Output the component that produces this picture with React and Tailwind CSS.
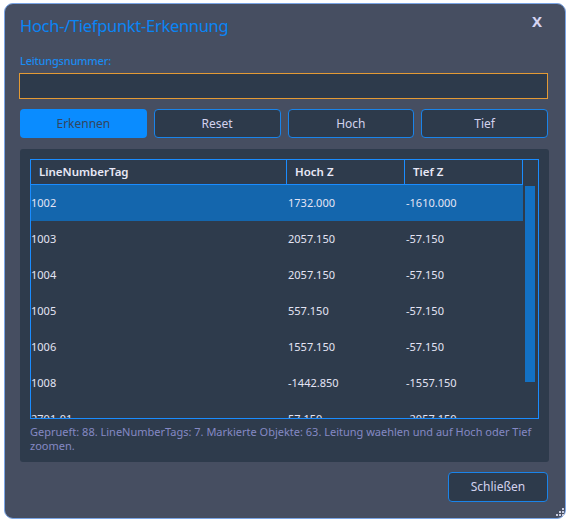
import React from 'react';

const rows = [
    { tag: '1002', hoch: '1732.000', tief: '-1610.000' },
    { tag: '1003', hoch: '2057.150', tief: '-57.150' },
    { tag: '1004', hoch: '2057.150', tief: '-57.150' },
    { tag: '1005', hoch: '557.150', tief: '-57.150' },
    { tag: '1006', hoch: '1557.150', tief: '-57.150' },
    { tag: '1008', hoch: '-1442.850', tief: '-1557.150' },
    { tag: '2701-01', hoch: '57.150', tief: '-2057.150' },
];

const buttons = ['Erkennen', 'Reset', 'Hoch', 'Tief'];

export default function App() {
    const selected = '1002';

    return (
        <div className="w-[569px] h-[523px] bg-white pt-[3px] pl-[4px] font-['Noto_Sans','Open_Sans',sans-serif]">
            <div className="relative w-[562px] h-[516px] bg-[#464e61] border border-[#7aa5e6] rounded-[9px] px-[15px] flex flex-col">
                {/* Title + close */}
                <div className="flex items-start justify-between pt-[10px]">
                    <h1 className="mt-[1px] text-[16.5px] leading-[22px] text-[#0a85f5] tracking-[-0.3px]">Hoch-/Tiefpunkt-Erkennung</h1>
                    <button className="mt-[-2px] mr-[8px] text-[15px] leading-[18px] font-bold text-[#d6d4f2]">X</button>
                </div>

                <label className="mt-[17px] text-[11px] leading-[14px] font-medium text-[#1a8bf0] tracking-[-0.2px]">Leitungsnummer:</label>
                <input
                    type="text"
                    className="mt-[5px] h-[26px] w-[529px] ml-[-1px] bg-[#2d3a4b] border border-[#e39a35] outline-none px-1 text-[12px] text-[#dedcf2]"
                />

                {/* Action buttons */}
                <div className="mt-[10px] w-[528px] grid grid-cols-4 gap-[7px]">
                    {buttons.map((label, i) => (
                        <button
                            key={label}
                            className={
                                i === 0
                                    ? 'h-[29px] rounded-[4px] bg-[#0a8cff] text-[#34465e] text-[12px]'
                                    : 'h-[29px] rounded-[4px] bg-[#2d3a4b] border border-[#1a84ea] text-[#d3d2ee] text-[12px]'
                            }
                        >
                            {label}
                        </button>
                    ))}
                </div>

                {/* Result panel */}
                <div className="mt-[11px] w-[529px] h-[313px] bg-[#2e3b4c] rounded-[3px] px-[10px] pt-[10px]">
                    <div className="flex h-[260px] border border-[#1a8cff] text-[#e4e4f4]">
                        <div className="w-[492px] flex flex-col">
                            <div className="flex h-[25px] border-b border-[#1a8cff] text-[11.5px] font-semibold text-[#e8e8f6]">
                                <div className="w-[256px] border-r border-[#1a8cff] pl-[8px] flex items-center">LineNumberTag</div>
                                <div className="w-[118px] border-r border-[#1a8cff] pl-[8px] flex items-center">Hoch Z</div>
                                <div className="w-[118px] border-r border-[#1a8cff] pl-[8px] flex items-center">Tief Z</div>
                            </div>
                            <div className="flex-1 overflow-hidden">
                                {rows.map((r) => (
                                    <div
                                        key={r.tag}
                                        className={
                                            r.tag === selected
                                                ? 'flex h-[36px] items-center text-[11px] bg-[#1466ad]'
                                                : 'flex h-[36px] items-center text-[11px]'
                                        }
                                    >
                                        <div className="w-[256px]">{r.tag}</div>
                                        <div className="w-[118px] pl-[1px]">{r.hoch}</div>
                                        <div className="w-[118px] pl-[1px]">{r.tief}</div>
                                    </div>
                                ))}
                            </div>
                        </div>
                        {/* Scrollbar */}
                        <div className="w-[14px] pt-[26px] pl-[2px]">
                            <div className="w-[10px] h-[196px] bg-[#1371c4]" />
                        </div>
                    </div>
                    <p className="mt-[6px] text-[11px] leading-[13.5px] text-[#8589c4]">
                        Geprueft: 88. LineNumberTags: 7. Markierte Objekte: 63. Leitung waehlen und auf Hoch oder Tief zoomen.
                    </p>
                </div>

                <div className="mt-[10px] flex justify-end pr-[2px]">
                    <button className="w-[100px] h-[30px] rounded-[4px] bg-[#2d3a4b] border border-[#1a84ea] text-[#d3d2ee] text-[12px]">
                        Schließen
                    </button>
                </div>

                {/* Resize grip */}
                <svg className="absolute right-[1px] bottom-[1px]" width="10" height="10" viewBox="0 0 10 10">
                    {[[8, 0], [8, 3], [5, 3], [8, 6], [5, 6], [2, 6]].map(([x, y], i) => (
                        <rect key={i} x={x} y={y + 1} width="2" height="2" fill="#c8cce0" />
                    ))}
                </svg>
            </div>
        </div>
    );
}
